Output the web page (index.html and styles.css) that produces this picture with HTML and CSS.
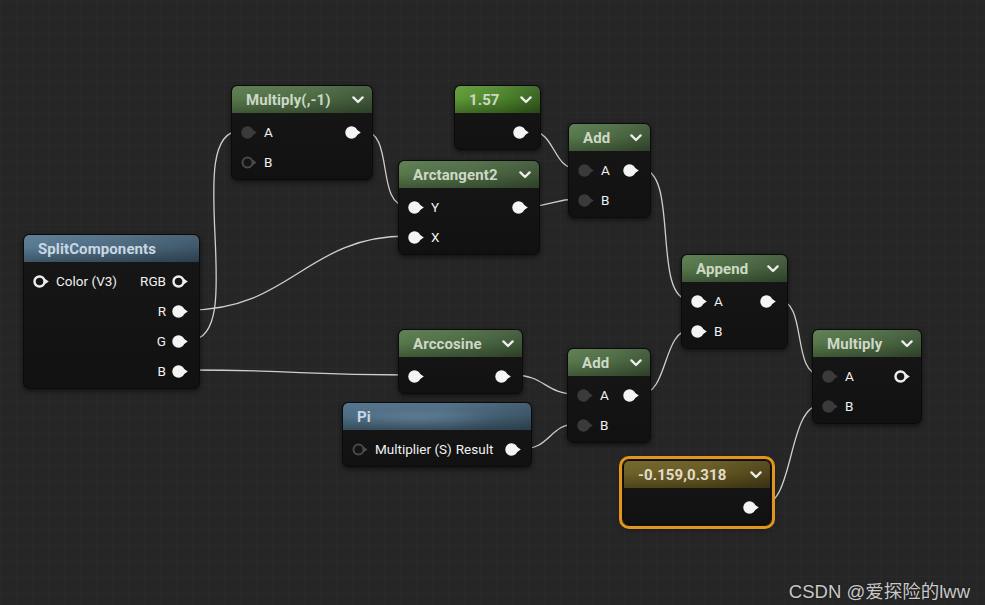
FILE: index.html
```html
<!DOCTYPE html>
<html lang="en">
<head>
<meta charset="utf-8">
<title>Material Graph</title>
<link rel="stylesheet" href="styles.css">
</head>
<body>
<svg class="defs" width="0" height="0" aria-hidden="true">
  <defs>
    <symbol id="p-on" viewBox="0 0 17 13"><circle cx="6.5" cy="6.5" r="6.2" fill="#f4f4f4"/><polygon points="11.5,3.6 15.8,6.5 11.5,9.4" fill="#f4f4f4"/></symbol>
    <symbol id="p-off" viewBox="0 0 17 13"><circle cx="6.5" cy="6.5" r="6.2" fill="#3a3a3a"/><polygon points="11.5,3.6 15.8,6.5 11.5,9.4" fill="#3a3a3a"/></symbol>
    <symbol id="p-ring" viewBox="0 0 17 13"><circle cx="6.5" cy="6.5" r="5" fill="#161616" stroke="#eeeeee" stroke-width="2.4"/><polygon points="11.8,3.8 15.8,6.5 11.8,9.2" fill="#eeeeee"/></symbol>
    <symbol id="p-dim" viewBox="0 0 17 13"><circle cx="6.5" cy="6.5" r="5" fill="#151515" stroke="#4a4a4a" stroke-width="2"/><polygon points="11.8,3.8 15.6,6.5 11.8,9.2" fill="#4a4a4a"/></symbol>
    <symbol id="chev" viewBox="0 0 12 8"><path d="M1.4 1.4 L6 6 L10.6 1.4" fill="none" stroke="#ececec" stroke-width="2.3" stroke-linecap="round" stroke-linejoin="round"/></symbol>
  </defs>
</svg>

<main class="canvas">
  <svg class="wires" width="985" height="605" viewBox="0 0 985 605">
    <path d="M190 310 C290 310 307 236 407 236"/>
    <path d="M190 340 C250 340 180 131 240 131"/>
    <path d="M190 370 C300 370 300 375 407 375"/>
    <path d="M363 131 C395 131 375 206 407 206"/>
    <path d="M531 131 C555 131 553 169 577 169"/>
    <path d="M530 206 C553 206 553 199 577 199"/>
    <path d="M641 169 C680 169 651 300 690 300"/>
    <path d="M513 375 C545 375 545 394 576 394"/>
    <path d="M522 449 C550 449 550 424 576 424"/>
    <path d="M641 394 C668 394 663 330 690 330"/>
    <path d="M778 300 C808 300 791 375 821 375"/>
    <path d="M761 506 C795 506 787 405 821 405"/>
  </svg>

  <!-- Multiply(,-1) -->
  <section class="node n-mul1">
    <header class="hdr green"><span class="title">Multiply(,-1)</span><svg class="chev"><use href="#chev"/></svg></header>
    <div class="body">
      <div class="row"><svg class="pin"><use href="#p-off"/></svg><span class="lbl">A</span><span class="sp"></span><svg class="pin"><use href="#p-on"/></svg></div>
      <div class="row"><svg class="pin"><use href="#p-dim"/></svg><span class="lbl">B</span></div>
    </div>
  </section>

  <!-- 1.57 -->
  <section class="node n-c157">
    <header class="hdr bright"><span class="title">1.57</span><svg class="chev"><use href="#chev"/></svg></header>
    <div class="body">
      <div class="row end"><svg class="pin"><use href="#p-on"/></svg></div>
    </div>
  </section>

  <!-- Add top -->
  <section class="node n-addA">
    <header class="hdr green"><span class="title">Add</span><svg class="chev"><use href="#chev"/></svg></header>
    <div class="body">
      <div class="row"><svg class="pin"><use href="#p-off"/></svg><span class="lbl">A</span><span class="sp"></span><svg class="pin"><use href="#p-on"/></svg></div>
      <div class="row"><svg class="pin"><use href="#p-off"/></svg><span class="lbl">B</span></div>
    </div>
  </section>

  <!-- Arctangent2 -->
  <section class="node n-atan">
    <header class="hdr green"><span class="title">Arctangent2</span><svg class="chev"><use href="#chev"/></svg></header>
    <div class="body">
      <div class="row"><svg class="pin"><use href="#p-on"/></svg><span class="lbl">Y</span><span class="sp"></span><svg class="pin"><use href="#p-on"/></svg></div>
      <div class="row"><svg class="pin"><use href="#p-on"/></svg><span class="lbl">X</span></div>
    </div>
  </section>

  <!-- SplitComponents -->
  <section class="node n-split">
    <header class="hdr blue"><span class="title">SplitComponents</span></header>
    <div class="body">
      <div class="row"><svg class="pin"><use href="#p-ring"/></svg><span class="lbl">Color (V3)</span><span class="sp"></span><span class="lbl">RGB</span><svg class="pin"><use href="#p-ring"/></svg></div>
      <div class="row end"><span class="lbl">R</span><svg class="pin"><use href="#p-on"/></svg></div>
      <div class="row end"><span class="lbl">G</span><svg class="pin"><use href="#p-on"/></svg></div>
      <div class="row end"><span class="lbl">B</span><svg class="pin"><use href="#p-on"/></svg></div>
    </div>
  </section>

  <!-- Append -->
  <section class="node n-append">
    <header class="hdr green"><span class="title">Append</span><svg class="chev"><use href="#chev"/></svg></header>
    <div class="body">
      <div class="row"><svg class="pin"><use href="#p-on"/></svg><span class="lbl">A</span><span class="sp"></span><svg class="pin"><use href="#p-on"/></svg></div>
      <div class="row"><svg class="pin"><use href="#p-on"/></svg><span class="lbl">B</span></div>
    </div>
  </section>

  <!-- Arccosine -->
  <section class="node n-acos">
    <header class="hdr green"><span class="title">Arccosine</span><svg class="chev"><use href="#chev"/></svg></header>
    <div class="body">
      <div class="row"><svg class="pin"><use href="#p-on"/></svg><span class="sp"></span><svg class="pin"><use href="#p-on"/></svg></div>
    </div>
  </section>

  <!-- Add bottom -->
  <section class="node n-addB">
    <header class="hdr green"><span class="title">Add</span><svg class="chev"><use href="#chev"/></svg></header>
    <div class="body">
      <div class="row"><svg class="pin"><use href="#p-off"/></svg><span class="lbl">A</span><span class="sp"></span><svg class="pin"><use href="#p-on"/></svg></div>
      <div class="row"><svg class="pin"><use href="#p-off"/></svg><span class="lbl">B</span></div>
    </div>
  </section>

  <!-- Pi -->
  <section class="node n-pi">
    <header class="hdr blue pi"><span class="title">Pi</span></header>
    <div class="body">
      <div class="row"><svg class="pin"><use href="#p-dim"/></svg><span class="lbl">Multiplier (S)</span><span class="lbl tight">Result</span><span class="sp"></span><svg class="pin"><use href="#p-on"/></svg></div>
    </div>
  </section>

  <!-- Multiply -->
  <section class="node n-mul2">
    <header class="hdr green"><span class="title">Multiply</span><svg class="chev"><use href="#chev"/></svg></header>
    <div class="body">
      <div class="row"><svg class="pin"><use href="#p-off"/></svg><span class="lbl">A</span><span class="sp"></span><svg class="pin"><use href="#p-ring"/></svg></div>
      <div class="row"><svg class="pin"><use href="#p-off"/></svg><span class="lbl">B</span></div>
    </div>
  </section>

  <!-- Constant2 selected -->
  <section class="node n-c2 selected">
    <header class="hdr olive"><span class="title">-0.159,0.318</span><svg class="chev"><use href="#chev"/></svg></header>
    <div class="body">
      <div class="row end"><svg class="pin"><use href="#p-on"/></svg></div>
    </div>
  </section>

  <p class="mark">CSDN @爱探险的lww</p>
</main>
</body>
</html>
```

FILE: styles.css
```css
* { box-sizing: border-box; }

html, body {
  margin: 0;
  padding: 0;
  width: 985px;
  height: 605px;
  overflow: hidden;
  background: #262626;
}

.defs { position: absolute; width: 0; height: 0; }

.canvas {
  position: relative;
  width: 985px;
  height: 605px;
  background-color: #262626;
  background-image:
    linear-gradient(to right, rgba(255,255,255,0.016) 1px, transparent 1px),
    linear-gradient(to bottom, rgba(255,255,255,0.016) 1px, transparent 1px);
  background-size: 16px 16px;
  font-family: Roboto, "Liberation Sans", sans-serif;
}

.wires {
  position: absolute;
  left: 0;
  top: 0;
}
.wires path {
  fill: none;
  stroke: #cfcfcf;
  stroke-width: 1.3;
}

.node {
  position: absolute;
  display: flex;
  flex-direction: column;
  border-radius: 6px;
  background: linear-gradient(to bottom, #171717, #111111);
  border: 1px solid #0b0b0b;
  box-shadow: 0 2px 5px rgba(0,0,0,0.55);
  overflow: hidden;
}

.hdr {
  height: 27px;
  display: flex;
  align-items: center;
  justify-content: space-between;
  padding: 0 8px 0 14px;
  border-radius: 5px 5px 0 0;
}
.title {
  font-size: 15px;
  font-weight: 700;
  color: #cdd8c6;
  white-space: nowrap;
  letter-spacing: 0.1px;
}
.chev { width: 12px; height: 8px; flex: none; }

.hdr.green {
  background:
    linear-gradient(to bottom, rgba(255,255,255,0.06) 0%, rgba(0,0,0,0) 45%, rgba(0,0,0,0.28) 100%),
    linear-gradient(to right, #58794c 0%, #4d6b44 55%, #3f5738 100%);
}
.hdr.bright {
  background:
    linear-gradient(to bottom, rgba(255,255,255,0.06) 0%, rgba(0,0,0,0) 45%, rgba(0,0,0,0.3) 100%),
    linear-gradient(to right, #5f9a37 0%, #4d842b 55%, #3a6322 100%);
}
.hdr.blue {
  background:
    linear-gradient(to bottom, rgba(255,255,255,0.06) 0%, rgba(0,0,0,0) 45%, rgba(0,0,0,0.3) 100%),
    linear-gradient(to right, #587991 0%, #4c6a80 55%, #3e576a 100%);
}
.hdr.blue .title { color: #c9d7e2; }
.hdr.pi {
  background:
    linear-gradient(to bottom, rgba(255,255,255,0.05) 0%, rgba(0,0,0,0) 45%, rgba(0,0,0,0.3) 100%),
    radial-gradient(ellipse 80px 11px at 40% 60%, rgba(140,170,190,0.3), rgba(0,0,0,0)),
    linear-gradient(to right, #4e6e86 0%, #4d6b82 55%, #3c5668 100%);
}
.hdr.olive {
  background:
    linear-gradient(to bottom, rgba(255,255,255,0.05) 0%, rgba(0,0,0,0) 45%, rgba(0,0,0,0.3) 100%),
    linear-gradient(to right, #6e6128 0%, #675a22 55%, #4f441a 100%);
}
.hdr.olive .title { color: #e2dccb; }

.body {
  padding: 4px 0 2px;
  display: flex;
  flex-direction: column;
}

.row {
  height: 30px;
  display: flex;
  align-items: center;
  gap: 6px;
  padding: 0 10px 0 9px;
}
.row.end { justify-content: flex-end; }

.pin { width: 17px; height: 13px; flex: none; }
.lbl {
  font-size: 13.5px;
  color: #f0f0f0;
  white-space: nowrap;
}
.lbl.tight { margin-left: -2px; }
.sp { flex: 1; }

.n-mul1   { left: 231px; top: 85px;  width: 142px; }
.n-c157   { left: 454px; top: 85px;  width: 87px; }
.n-addA   { left: 568px; top: 123px; width: 83px; }
.n-atan   { left: 398px; top: 160px; width: 142px; }
.n-split  { left: 23px;  top: 234px; width: 177px; }
.n-append { left: 681px; top: 254px; width: 107px; }
.n-acos   { left: 398px; top: 329px; width: 125px; }
.n-addB   { left: 567px; top: 348px; width: 84px; }
.n-pi     { left: 342px; top: 402px; width: 190px; }
.n-mul2   { left: 812px; top: 329px; width: 110px; }
.n-c2     { left: 623px; top: 460px; width: 148px; }

.node.selected {
  overflow: visible;
  box-shadow: 0 0 0 1px #1a140a, 0 0 0 4px #e0961c, 0 2px 8px rgba(0,0,0,0.6);
}

.mark {
  position: absolute;
  right: 15px;
  bottom: 2px;
  margin: 0;
  font-family: "Liberation Sans", "Noto Sans CJK SC", sans-serif;
  font-size: 18.5px;
  color: #c8c8c8;
  text-shadow: 0 0 2px rgba(0,0,0,0.5);
}
```
